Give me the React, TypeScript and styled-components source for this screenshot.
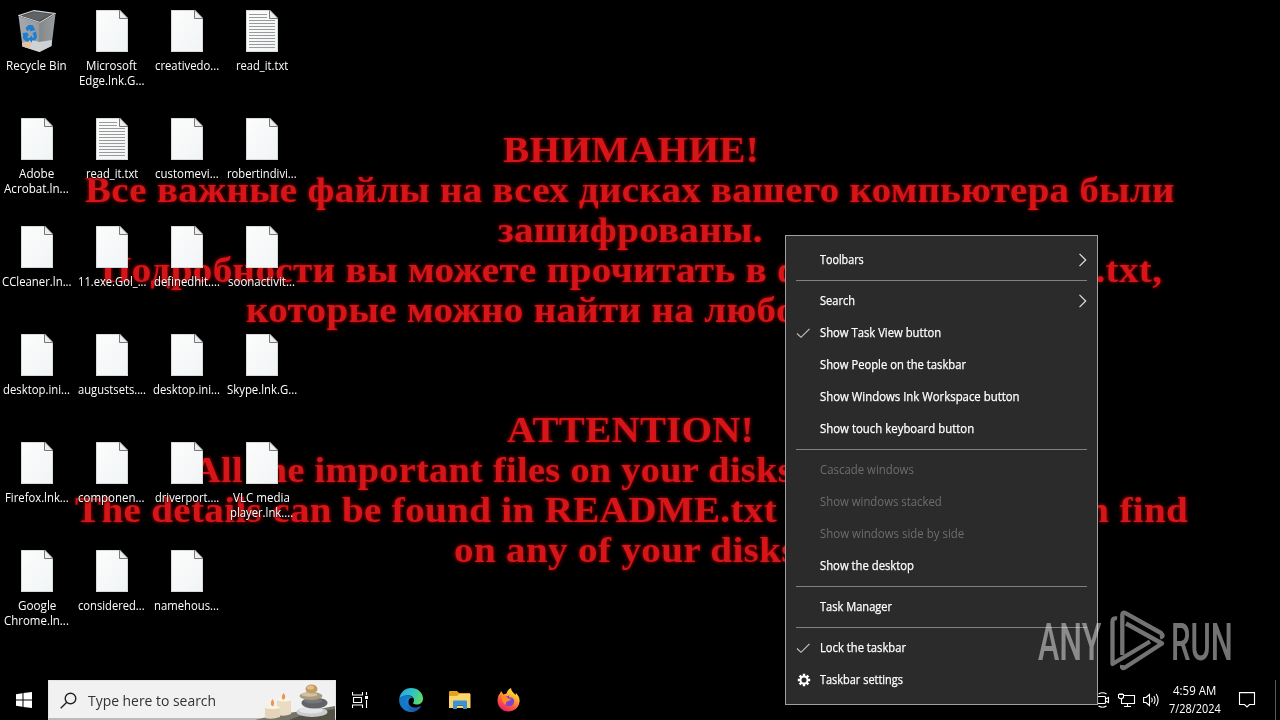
import React, { useLayoutEffect, useRef, useState } from 'react';
import styled, { createGlobalStyle } from 'styled-components';

const Global = createGlobalStyle`
  * { box-sizing: border-box; }
  html, body { margin: 0; padding: 0; background: #000; overflow: hidden; }
`;

const UI_FONT = `'Open Sans', 'Noto Sans', sans-serif`;

/* ---------- text squeezed or stretched to a given width ---------- */

const FitBox = styled.span<{ $w: number }>`
  display: block;
  flex: none;
  width: ${(p) => p.$w}px;
  white-space: pre;
`;

const FitInner = styled.span`
  display: inline-block;
  transform-origin: 0 50%;
`;

function Fit({ w, children }: { w: number; children: string }) {
  const ref = useRef<HTMLSpanElement>(null);
  const [scale, setScale] = useState(1);
  useLayoutEffect(() => {
    if (ref.current) setScale(w / ref.current.offsetWidth);
  }, [w, children]);
  return (
    <FitBox $w={w}>
      <FitInner ref={ref} style={{ transform: `scaleX(${scale})` }}>
        {children}
      </FitInner>
    </FitBox>
  );
}

/* ---------- screen and wallpaper ---------- */

const Screen = styled.main`
  position: relative;
  width: 1280px;
  height: 720px;
  display: flex;
  flex-direction: column;
  justify-content: space-between;
  overflow: hidden;
  background: #000;
  font-family: ${UI_FONT};
  color: #fff;
`;

const Wallpaper = styled.div`
  position: absolute;
  inset: 0;
  padding: 131px 0 0;
  display: flex;
  flex-direction: column;
  font: bold 35px/40px 'Liberation Serif', serif;
  letter-spacing: 0.3px;
  color: #d61519;
  text-shadow: 0 0 3px #900000, 0 0 5px #500000;
  filter: blur(0.7px);
`;

const WallLine = styled.div<{ $x: number }>`
  height: 40px;
  padding-left: ${(p) => p.$x}px;
`;

const wallpaperLines: [string, number, number][] = [
  ['ВНИМАНИЕ!', 503, 256],
  ['Все важные файлы на всех дисках вашего компьютера были', 85, 1090],
  ['зашифрованы.', 498, 265],
  ['Подробности вы можете прочитать в файлах README.txt,', 101, 1061],
  ['которые можно найти на любом из дисков.', 246, 768],
  ['', 0, 0],
  ['', 0, 0],
  ['ATTENTION!', 507, 247],
  ['All the important files on your disks were encrypted.', 193, 875],
  ['The details can be found in README.txt files which you can find', 75, 1113],
  ['on any of your disks.', 454, 353],
];

/* ---------- desktop icons ---------- */

const Desktop = styled.section`
  position: relative;
  display: grid;
  grid-auto-flow: column;
  grid-template-rows: repeat(6, 108px);
  grid-template-columns: repeat(4, 75px);
  width: 300px;
`;

const DesktopItem = styled.div`
  display: flex;
  flex-direction: column;
  align-items: center;
  padding-top: 10px;
  padding-right: 1px;
  font-size: 12px;
  line-height: 15px;
  text-shadow: 0 1px 2px #000, 0 0 1px #000;
  svg { display: block; margin-bottom: 6px; flex: none; }
  > span { margin-right: 1px; }
`;

const FileIcon = ({ lined }: { lined?: boolean }) => (
  <svg width="32" height="42" viewBox="0 0 32 42">
    <defs>
      <linearGradient id="paper" x1="0" y1="0" x2="1" y2="1">
        <stop offset="0" stopColor="#fcfdfd" />
        <stop offset="1" stopColor="#f1f4f5" />
      </linearGradient>
    </defs>
    <path d="M0 0H24L32 8.5V42H0Z" fill="url(#paper)" />
    <path d="M0 .5H23.5M.5 0V41.5H31.5V9" fill="none" stroke="#c8cccd" strokeWidth=".7" />
    <path d="M23.5 0V8.5H32" fill="#eceeef" stroke="#777" strokeWidth="1" />
    <path d="M23.5 0L32 8.5" stroke="#999" strokeWidth=".8" />
    {lined && (
      <g stroke="#9a9a9a" strokeWidth="1">
        <path d="M3 4.5H21M3 7.5H21" />
        {[10.5, 13.5, 16.5, 19.5, 22.5, 25.5, 28.5, 31.5, 34.5, 37.5].map((y) => (
          <path key={y} d={`M3 ${y}H29`} />
        ))}
      </g>
    )}
  </svg>
);

const BinIcon = () => (
  <svg width="38" height="42" viewBox="0 0 38 42">
    <defs>
      <linearGradient id="bin" x1="0" y1="0" x2="1" y2="0">
        <stop offset="0" stopColor="#a6a9ac" />
        <stop offset=".55" stopColor="#989b9e" />
        <stop offset=".57" stopColor="#85888b" />
        <stop offset="1" stopColor="#9a9da0" />
      </linearGradient>
    </defs>
    <path d="M.5 6L22 13L37.500 4L33.500 36L21.500 42L4.500 36.500Z" fill="url(#bin)" />
    <path d="M4 33L15 30L21 32L34 30L33.500 36L21.500 42L4.500 36.500Z" fill="#cfd2d4" />
    <path d="M4.500 33L14 30L12 38.500L4.500 36.500Z" fill="#e3c3a6" />
    <path d="M.8 5.500L16 .6L37 3.500L22 12.500Z" fill="#4a4d4f" stroke="#d4d6d7" strokeWidth="1.100" />
    <path d="M4 6L16 2L33 4.300L21 10.500Z" fill="#606365" />
    <g fill="#1b7fd4">
      <path d="M7.500 18L10.500 15H14.500L17.500 20L12 21.500L11.500 19L9.500 21.500Z" />
      <path d="M14.500 23L18 21.500L19 27L17 30.500H14V33L10.500 28.500L14 25.500V27.500H16Z" />
      <path d="M4.500 23L9.500 22.500L11 26L9.500 26V28H11V31.500H8L5 28.500V25Z" />
    </g>
  </svg>
);

type Item = { kind: 'bin' | 'file' | 'text'; lines: [string, number][] };
const f = (...lines: [string, number][]): Item => ({ kind: 'file', lines });
const t = (...lines: [string, number][]): Item => ({ kind: 'text', lines });

const items: Item[] = [
  { kind: 'bin', lines: [['Recycle Bin', 61]] },
  f(['Adobe', 35], ['Acrobat.ln...', 65]),
  f(['CCleaner.ln...', 70]),
  f(['desktop.ini...', 67]),
  f(['Firefox.lnk...', 64]),
  f(['Google', 38], ['Chrome.ln...', 65]),
  f(['Microsoft', 51], ['Edge.lnk.G...', 65]),
  t(['read_it.txt', 52]),
  f(['11.exe.Gol_...', 68]),
  f(['augustsets....', 68]),
  f(['componen...', 67]),
  f(['considered...', 67]),
  f(['creativedo...', 64]),
  f(['customevi...', 64]),
  f(['definedhit....', 66]),
  f(['desktop.ini...', 67]),
  f(['driverport....', 64]),
  f(['namehous...', 65]),
  t(['read_it.txt', 52]),
  f(['robertindivi...', 70]),
  f(['soonactivit...', 67]),
  f(['Skype.lnk.G...', 70]),
  f(['VLC media', 57], ['player.lnk....', 63]),
];

/* ---------- taskbar ---------- */

const Taskbar = styled.footer`
  position: relative;
  display: flex;
  height: 40px;
  background: #000;
`;

const TaskButton = styled.div<{ $w: number }>`
  width: ${(p) => p.$w}px;
  display: flex;
  align-items: center;
  justify-content: center;
`;

const SearchBox = styled.div`
  width: 288px;
  display: flex;
  align-items: center;
  background: #f1f1f1;
  border: 1px solid #e4e4e4;
  border-bottom: 2px solid #bbb;
  color: #333;
  font-size: 15px;
  padding-left: 11px;
  > svg:first-child { margin-top: 2px; }
`;

const SearchText = styled.div`
  margin-left: 11px;
  line-height: 20px;
`;

const SearchArt = styled.svg`
  align-self: stretch;
  margin-left: auto;
  margin-bottom: -2px;
  flex: none;
`;

const Tray = styled.div`
  margin-left: auto;
  display: flex;
  align-items: center;
`;

const TrayIcon = styled.div`
  width: 24px;
  display: flex;
  justify-content: center;
`;

const Clock = styled.div`
  width: 64px;
  display: flex;
  flex-direction: column;
  align-items: center;
  font-size: 12px;
  line-height: 18px;
  padding-right: 1px;
  margin-top: -1px;
`;

const NotifyButton = styled.div`
  width: 48px;
  padding-left: 11px;
  padding-top: 3px;
`;

const PeekEdge = styled.div`
  width: 5px;
  height: 40px;
  border-left: 1px solid #5a5a5a;
`;

/* ---------- context menu ---------- */

const Menu = styled.nav`
  position: absolute;
  left: 785px;
  top: 235px;
  width: 313px;
  height: 470px;
  padding: 8px 10px;
  background: #2b2b2b;
  border: 1px solid #a0a0a0;
`;

const MenuRow = styled.div<{ $off?: boolean }>`
  height: 32px;
  padding-bottom: 1px;
  display: flex;
  align-items: center;
  font-size: 12px;
  line-height: 17px;
  color: ${(p) => (p.$off ? '#6d6d6d' : '#fff')};
  -webkit-text-stroke: ${(p) => (p.$off ? '0' : '0.25px #fff')};
  > span { margin-top: -1px; }
`;

const MenuMark = styled.div`
  width: 24px;
  height: 16px;
  flex: none;
  display: flex;
  align-items: center;
`;

const MenuArrow = styled.svg`
  margin-left: auto;
`;

const Rule = styled.hr`
  border: 0;
  height: 1px;
  margin: 4px 0;
  background: #808080;
`;

const Check = () => (
  <svg width="15" height="12" viewBox="0 0 15 12" fill="none" stroke="#c8c8c8" strokeWidth="1.100">
    <path d="M1 6.500L5 10.300L13.500 1.800" />
  </svg>
);

const Gear = () => (
  <svg width="15" height="14" viewBox="-8 -7 15 14">
    <g stroke="#fff" strokeWidth="2.400">
      {[0, 45, 90, 135].map((a) => (
        <path key={a} d="M0 -6.200V-3.600M0 3.600V6.200" transform={`rotate(${a})`} />
      ))}
    </g>
    <circle r="3.500" fill="none" stroke="#fff" strokeWidth="1.900" />
  </svg>
);

type Row = { label: string; w: number; mark?: 'check' | 'gear'; arrow?: boolean; off?: boolean };
const menu: (Row | null)[] = [
  { label: 'Toolbars', w: 44, arrow: true },
  null,
  { label: 'Search', w: 35, arrow: true },
  { label: 'Show Task View button', w: 121, mark: 'check' },
  { label: 'Show People on the taskbar', w: 146 },
  { label: 'Show Windows Ink Workspace button', w: 200 },
  { label: 'Show touch keyboard button', w: 154 },
  null,
  { label: 'Cascade windows', w: 94, off: true },
  { label: 'Show windows stacked', w: 122, off: true },
  { label: 'Show windows side by side', w: 144, off: true },
  { label: 'Show the desktop', w: 94 },
  null,
  { label: 'Task Manager', w: 72 },
  null,
  { label: 'Lock the taskbar', w: 86, mark: 'check' },
  { label: 'Taskbar settings', w: 83, mark: 'gear' },
];

/* ---------- watermark ---------- */

const Watermark = styled.div`
  position: absolute;
  left: 1038px;
  top: 609px;
  height: 64px;
  display: flex;
  align-items: center;
  font: 500 51px/64px Roboto, sans-serif;
  color: #fff;
  opacity: 0.45;
  > span { margin-top: 3px; }
`;

const WatermarkLogo = styled.svg`
  margin: 0 6px 0 9px;
`;

export default function App() {
  return (
    <Screen>
      <Global />
      <Wallpaper>
        {wallpaperLines.map(([text, x, w], i) => (
          <WallLine key={i} $x={x}>
            {text && <Fit w={w}>{text}</Fit>}
          </WallLine>
        ))}
      </Wallpaper>

      <Desktop>
        {items.map((item, i) => (
          <DesktopItem key={i}>
            {item.kind === 'bin' ? <BinIcon /> : <FileIcon lined={item.kind === 'text'} />}
            {item.lines.map(([text, w]) => (
              <Fit key={text} w={w}>{text}</Fit>
            ))}
          </DesktopItem>
        ))}
      </Desktop>

      <Taskbar>
        <TaskButton $w={48}>
          <svg width="16" height="16" viewBox="0 0 16 16" fill="#fff">
            <path d="M0 2.200L6.500 1.300V7.500H0ZM7.500 1.100L16 0V7.500H7.500ZM0 8.500H6.500V14.700L0 13.800ZM7.500 8.500H16V16L7.500 14.900Z" />
          </svg>
        </TaskButton>
        <SearchBox>
          <svg width="17" height="17" viewBox="0 0 17 17" fill="none" stroke="#222" strokeWidth="1.400">
            <circle cx="10.500" cy="6.500" r="5.300" />
            <path d="M6.800 10.300L.7 16.300" />
          </svg>
          <SearchText>
            <Fit w={128}>Type here to search</Fit>
          </SearchText>
          <SearchArt width="80" height="39" viewBox="0 0 80 39">
            <path d="M0 39L16 35L40 31L64 28L80 25V39Z" fill="#77746a" />
            <path d="M34 39L50 33L80 28V39Z" fill="#545247" />
            <path d="M10 37V26Q18 24 25 26V35Z" fill="#eee2cc" />
            <path d="M22 34V19Q30 17 36 19V33Q30 36 22 34Z" fill="#eadcc4" />
            <path d="M10 37V27H25V36Q17 39 10 37Z" fill="#e4d4ba" />
            <ellipse cx="17.500" cy="26.500" rx="7.500" ry="1.500" fill="#fbf5e6" />
            <ellipse cx="29" cy="19" rx="7" ry="1.500" fill="#fbf5e6" />
            <path d="M17.500 18Q21 23 17.500 25.500Q14 23 17.500 18Z" fill="#ef9350" />
            <path d="M28.500 12Q32 16 28.500 19Q25 17 28.500 12Z" fill="#ef9350" />
            <ellipse cx="57" cy="31" rx="15.500" ry="5" fill="#cbccce" />
            <ellipse cx="56" cy="29.500" rx="12" ry="3" fill="#e4e5e6" />
            <ellipse cx="59.500" cy="22" rx="13" ry="5.500" fill="#626366" />
            <ellipse cx="58" cy="20" rx="9" ry="2.500" fill="#77787c" />
            <ellipse cx="56" cy="15" rx="11.500" ry="4" fill="#aa9a7e" />
            <ellipse cx="54.500" cy="13.700" rx="8" ry="2" fill="#d0c2a6" />
            <ellipse cx="56.500" cy="8" rx="6" ry="4.500" fill="#c59b60" />
            <ellipse cx="55.500" cy="6.500" rx="3.500" ry="2" fill="#e2c08d" />
          </SearchArt>
        </SearchBox>
        <TaskButton $w={48}>
          <svg width="17" height="16" viewBox="0 0 17 16" fill="none" stroke="#fff" strokeWidth="1.100">
            <path d="M.5 0V3H10.500V0M1.500 5.500H9.500V10.500H1.500ZM.5 16V13H10.500V16M14.500 0V3M14.500 8V16" />
            <rect x="13" y="4" width="3" height="3" fill="#fff" stroke="none" />
          </svg>
        </TaskButton>
        <TaskButton $w={54}>
          <svg width="24" height="24" viewBox="0 0 24 24">
            <defs>
              <linearGradient id="edgeTop" x1="0" y1=".3" x2="1" y2=".6">
                <stop offset="0" stopColor="#2aa5e0" />
                <stop offset=".5" stopColor="#2fc3c4" />
                <stop offset="1" stopColor="#5fdc62" />
              </linearGradient>
              <linearGradient id="edgeLow" x1="0" y1="0" x2="1" y2="1">
                <stop offset="0" stopColor="#1b8ad6" />
                <stop offset="1" stopColor="#124a96" />
              </linearGradient>
            </defs>
            <path d="M.2 11C1 4.500 6 0 12 0C19 0 24 5 24 10.500C24 14.500 21 16.500 17.500 16.500C14.500 16.500 13.500 15.400 14.300 14.500C16 12.500 15 8 10 7.500C5 7.200 1.500 9 .2 11Z" fill="url(#edgeTop)" />
            <path d="M.2 11C2.500 7.500 6 7 9 7.200C12 7.500 13.500 9 14 10.500C11 9 8.500 12 9.500 15.500C10.500 19.500 16 21.500 22 18C20 21.500 16.500 24 12 24C5 24 -.6 18 .2 11Z" fill="#1676c8" />
            <path d="M8.200 10C5 13 6 21 13.500 23.900C17.500 23.500 20.500 21.500 22.300 18C16 21.500 10.500 19.500 9.500 15.500C9 13 9.600 11.500 11 10.300Z" fill="url(#edgeLow)" />
          </svg>
        </TaskButton>
        <TaskButton $w={44}>
          <svg width="22" height="20" viewBox="0 0 22 20">
            <path d="M0 2Q0 1 1 1H8L10 3H21V7H0Z" fill="#e3a21a" />
            <path d="M0 6H8L10 4H21.500V18H0Z" fill="#fbd56b" />
            <path d="M4 19V11.500Q4 10.500 5 10.500H17Q18 10.500 18 11.500V19H14V14.500H8V19Z" fill="#3a94d4" />
            <path d="M8 14.500H14V16H8Z" fill="#2a74b4" />
          </svg>
        </TaskButton>
        <TaskButton $w={53}>
          <svg width="23" height="24" viewBox="0 0 23 24">
            <defs>
              <linearGradient id="fox" x1=".8" y1="0" x2=".25" y2="1">
                <stop offset="0" stopColor="#fff04a" />
                <stop offset=".35" stopColor="#ffb02e" />
                <stop offset=".65" stopColor="#ff5a3a" />
                <stop offset="1" stopColor="#e81b70" />
              </linearGradient>
            </defs>
            <path d="M4 3L6.500 6.500L9.500 5.500C10.500 2.500 12 .8 14 0C14 3 16.500 4.500 18.500 7L19 5C22 8 23 11 22.500 14C21.500 20 17 23.500 11.500 23.500C5 23.500 .5 18.500 .5 12.500C.5 9.500 1.500 7 3 5.500Z" fill="url(#fox)" />
            <circle cx="12" cy="13" r="5.200" fill="#7b45cf" />
            <path d="M5 9.500Q9 7.500 11.500 10.500L14 11Q13 13 10 13.500Q8 15 9.500 17Q5 15.500 5 9.500Z" fill="#ff8a2a" />
            <path d="M12 7Q16.500 8 17.500 12Q16 9.500 12 9Z" fill="#ffa62e" />
          </svg>
        </TaskButton>

        <Tray>
          <TrayIcon>
            <svg width="16" height="16" viewBox="0 0 16 16" fill="none" stroke="#fff" strokeWidth="1.100">
              <rect x="2.500" y="4.500" width="8" height="7" rx="1" />
              <path d="M10.500 7L13.500 5.500V10.500L10.500 9M3.500 2Q7.500 -.5 11.500 2M3.500 14Q7.500 16.500 11.500 14" />
            </svg>
          </TrayIcon>
          <TrayIcon>
            <svg width="18" height="15" viewBox="0 0 18 15" fill="none" stroke="#fff" strokeWidth="1.100">
              <path d="M5.500 2.500H16.500V10.500H3.500V6M9.500 10.500V13.500M6 13.500H13" />
              <path d="M.5 1.500H5.500V4.500Q3 7 .5 4.500ZM2 0V2M4 0V2" />
            </svg>
          </TrayIcon>
          <TrayIcon>
            <svg width="17" height="14" viewBox="0 0 17 14" fill="none" stroke="#fff" strokeWidth="1.100">
              <path d="M.6 4.500H3L6.500 1.500V12.500L3 9.500H.6Z" />
              <path d="M8.500 4.700Q10 7 8.500 9.300M10.800 3Q13.300 7 10.800 11M13.200 1Q17 7 13.200 13" />
            </svg>
          </TrayIcon>
          <Clock>
            <Fit w={43}>4:59 AM</Fit>
            <Fit w={52}>7/28/2024</Fit>
          </Clock>
          <NotifyButton>
            <svg width="18" height="16" viewBox="0 0 18 16" fill="none" stroke="#fff" strokeWidth="1.100">
              <path d="M1.500 .6H16.500V12.500H11.500L9 15L6.500 12.500H1.500Z" />
            </svg>
          </NotifyButton>
          <PeekEdge />
        </Tray>
      </Taskbar>

      <Menu>
        {menu.map((row, i) =>
          row ? (
            <MenuRow key={i} $off={row.off}>
              <MenuMark>
                {row.mark === 'check' && <Check />}
                {row.mark === 'gear' && <Gear />}
              </MenuMark>
              <Fit w={row.w}>{row.label}</Fit>
              {row.arrow && (
                <MenuArrow width="9" height="14" viewBox="0 0 9 14" fill="none" stroke="#e0e0e0" strokeWidth="1.200">
                  <path d="M1.500 .8L7.700 7L1.500 13.200" />
                </MenuArrow>
              )}
            </MenuRow>
          ) : (
            <Rule key={i} />
          ),
        )}
      </Menu>

      <Watermark>
        <Fit w={63}>ANY</Fit>
        <WatermarkLogo width="55" height="64" viewBox="0 0 55 64" fill="none" stroke="#fff" strokeWidth="4.300" strokeLinejoin="round">
          <path d="M7 9.500Q2.500 8.500 2.500 12.500V55L40 32.500" />
          <path d="M12.300 46V6Q12.300 2.500 15.500 4.200L51 24Q54.500 27.500 50 28.500" />
          <path d="M16 14.500L52 34.500L15 58.500Q11.500 60.500 12 56" />
        </WatermarkLogo>
        <Fit w={62}>RUN</Fit>
      </Watermark>
    </Screen>
  );
}
